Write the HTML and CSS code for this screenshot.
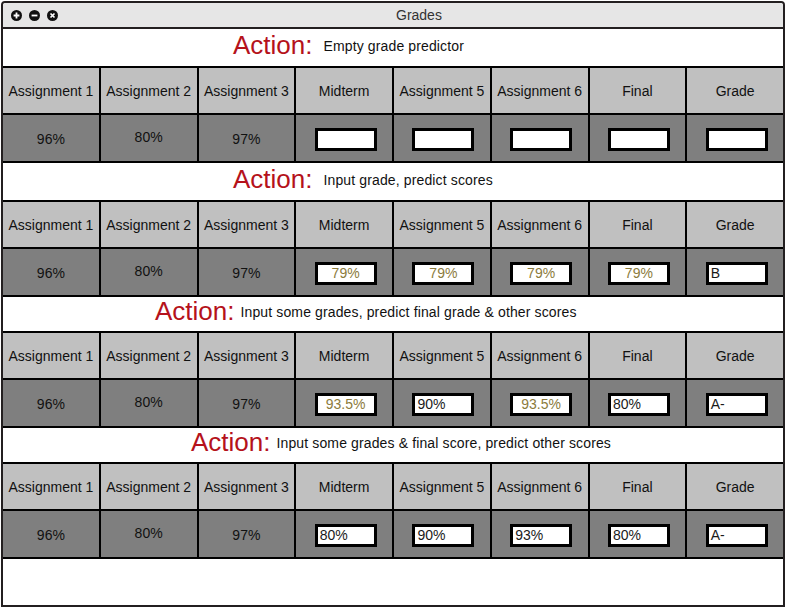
FILE: index.html
```html
<!DOCTYPE html>
<html>
<head>
<meta charset="utf-8">
<title>Grades</title>
<link rel="stylesheet" href="styles.css">
</head>
<body>
<div class="window">
  <div class="titlebar">
    <div class="controls">
      <svg class="ctl" viewBox="0 0 11 11" width="11" height="11"><circle cx="5.5" cy="5.5" r="5.5" fill="#111"/><path d="M5.5 2.6V8.4M2.6 5.5H8.4" stroke="#fff" stroke-width="1.8"/></svg>
      <svg class="ctl" viewBox="0 0 11 11" width="11" height="11"><circle cx="5.5" cy="5.5" r="5.5" fill="#111"/><path d="M2.6 5.5H8.4" stroke="#fff" stroke-width="1.8"/></svg>
      <svg class="ctl" viewBox="0 0 11 11" width="11" height="11"><circle cx="5.5" cy="5.5" r="5.5" fill="#111"/><path d="M3.5 3.5L7.5 7.5M7.5 3.5L3.5 7.5" stroke="#fff" stroke-width="1.7"/></svg>
    </div>
    <div class="title">Grades</div>
  </div>
  <div class="content">
    <div class="action a1"><span class="label">Action:</span><span class="desc">Empty grade predictor</span></div>
    <div class="table">
      <div class="th">Assignment 1</div><div class="th">Assignment 2</div><div class="th">Assignment 3</div><div class="th">Midterm</div><div class="th">Assignment 5</div><div class="th">Assignment 6</div><div class="th">Final</div><div class="th">Grade</div>
      <div class="td">96%</div><div class="td up">80%</div><div class="td">97%</div>
      <div class="td"><div class="box"></div></div><div class="td"><div class="box"></div></div><div class="td"><div class="box"></div></div><div class="td"><div class="box"></div></div><div class="td"><div class="box"></div></div>
    </div>

    <div class="action a2"><span class="label">Action:</span><span class="desc">Input grade, predict scores</span></div>
    <div class="table">
      <div class="th">Assignment 1</div><div class="th">Assignment 2</div><div class="th">Assignment 3</div><div class="th">Midterm</div><div class="th">Assignment 5</div><div class="th">Assignment 6</div><div class="th">Final</div><div class="th">Grade</div>
      <div class="td">96%</div><div class="td up">80%</div><div class="td">97%</div>
      <div class="td"><div class="box pred">79%</div></div><div class="td"><div class="box pred">79%</div></div><div class="td"><div class="box pred">79%</div></div><div class="td"><div class="box pred">79%</div></div><div class="td"><div class="box">B</div></div>
    </div>

    <div class="action short a3"><span class="label">Action:</span><span class="desc">Input some grades, predict final grade &amp; other scores</span></div>
    <div class="table">
      <div class="th">Assignment 1</div><div class="th">Assignment 2</div><div class="th">Assignment 3</div><div class="th">Midterm</div><div class="th">Assignment 5</div><div class="th">Assignment 6</div><div class="th">Final</div><div class="th">Grade</div>
      <div class="td">96%</div><div class="td up">80%</div><div class="td">97%</div>
      <div class="td"><div class="box pred">93.5%</div></div><div class="td"><div class="box">90%</div></div><div class="td"><div class="box pred">93.5%</div></div><div class="td"><div class="box">80%</div></div><div class="td"><div class="box">A-</div></div>
    </div>

    <div class="action short a4"><span class="label">Action:</span><span class="desc">Input some grades &amp; final score, predict other scores</span></div>
    <div class="table">
      <div class="th">Assignment 1</div><div class="th">Assignment 2</div><div class="th">Assignment 3</div><div class="th">Midterm</div><div class="th">Assignment 5</div><div class="th">Assignment 6</div><div class="th">Final</div><div class="th">Grade</div>
      <div class="td">96%</div><div class="td up">80%</div><div class="td">97%</div>
      <div class="td"><div class="box">80%</div></div><div class="td"><div class="box">90%</div></div><div class="td"><div class="box">93%</div></div><div class="td"><div class="box">80%</div></div><div class="td"><div class="box">A-</div></div>
    </div>

    <div class="blank"></div>
  </div>
</div>
</body>
</html>
```

FILE: styles.css
```css
body {
  margin: 0;
  background: #fff;
  font-family: "Liberation Sans", Arial, sans-serif;
}

.window {
  margin: 1px 0 0 1px;
  width: 780px;
  border: 2px solid #231f20;
  border-radius: 4px 4px 0 0;
  background: #fff;
}

.titlebar {
  height: 24px;
  background: #e6e6e6;
  border-bottom: 2px solid #231f20;
  border-radius: 3px 3px 0 0;
  display: flex;
  align-items: center;
}

.controls {
  display: flex;
  gap: 7px;
  padding-left: 8px;
}

.ctl {
  display: block;
}

.title {
  margin-left: 338px;
  font-size: 14px;
  color: #333;
}

.content {
  display: flex;
  flex-direction: column;
  gap: 2px;
  background: #000;
}

.action {
  background: #fff;
  height: 37px;
  box-sizing: border-box;
  padding-bottom: 4px;
  display: flex;
  align-items: center;
}

.action.short {
  height: 34px;
  padding-bottom: 5px;
}

.a1, .a2 { padding-left: 230px; }
.a3 { padding-left: 152px; }
.a4 { padding-left: 188px; }

.label {
  color: #b5121b;
  font-size: 26px;
}

.desc {
  font-size: 14px;
  letter-spacing: 0.13px;
  color: #111;
  margin-left: 11px;
}

.short .desc {
  margin-left: 6px;
}

.table {
  display: grid;
  grid-template-columns: repeat(8, 1fr);
  grid-template-rows: 45px 46px;
  gap: 2px;
  background: #000;
}

.th, .td {
  display: flex;
  align-items: center;
  justify-content: center;
  font-size: 14px;
  color: #111;
}

.th {
  background: #c0c0c0;
}

.td {
  background: #7f7f7f;
  padding-top: 2px;
}

.td.up {
  padding-top: 0;
  padding-bottom: 2px;
}

.box {
  width: 62px;
  height: 23px;
  box-sizing: border-box;
  border: 3px solid #000;
  background: #fff;
  display: flex;
  align-items: center;
  padding-left: 2px;
  margin-left: 3px;
  font-size: 14px;
  color: #1a1a1a;
}

.box.pred {
  justify-content: center;
  padding-left: 0;
  color: #8b7b3c;
}

.blank {
  height: 46px;
  background: #fff;
}
```
